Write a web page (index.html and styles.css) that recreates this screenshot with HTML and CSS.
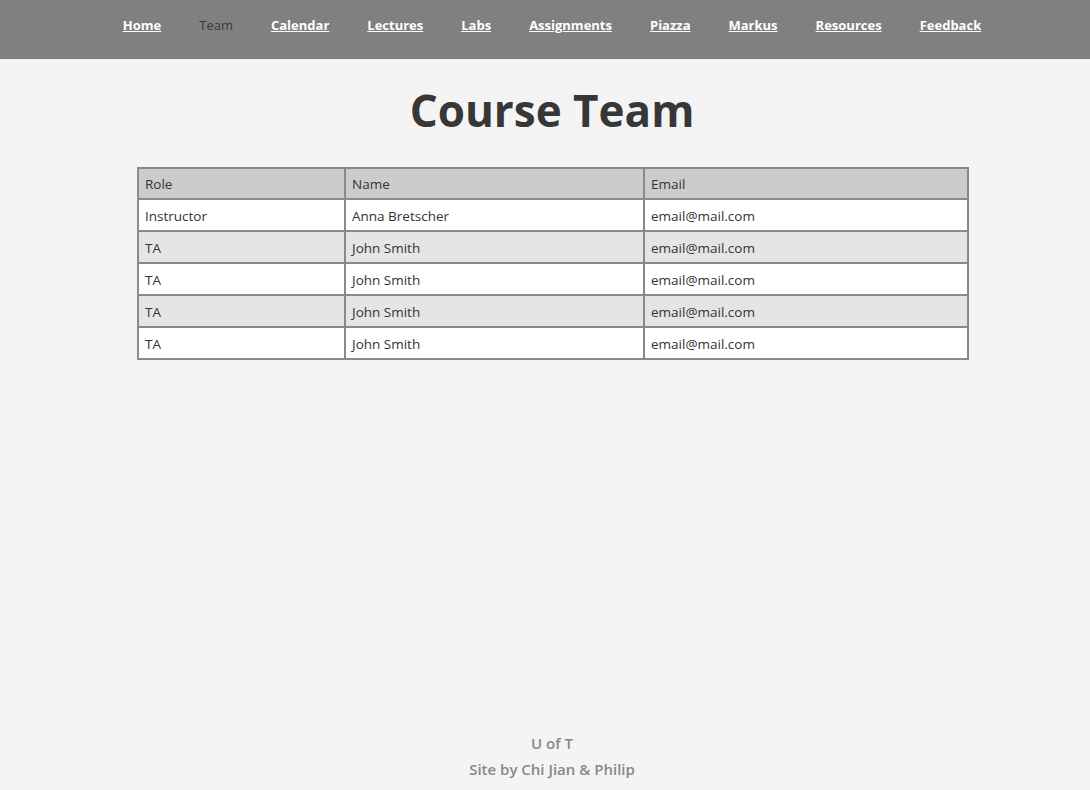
FILE: index.html
```html
<!DOCTYPE html>
<html lang="en">
<head>
<meta charset="utf-8">
<title>Course Team</title>
<link rel="stylesheet" href="styles.css">
</head>
<body>
<nav class="topnav">
  <ul class="navlist">
    <li><a href="#">Home</a></li>
    <li><span class="current">Team</span></li>
    <li><a href="#">Calendar</a></li>
    <li><a href="#">Lectures</a></li>
    <li><a href="#">Labs</a></li>
    <li><a href="#">Assignments</a></li>
    <li><a href="#">Piazza</a></li>
    <li><a href="#">Markus</a></li>
    <li><a href="#">Resources</a></li>
    <li><a href="#">Feedback</a></li>
  </ul>
</nav>
<main class="content">
  <h1 class="title">Course Team</h1>
  <table class="team">
    <thead>
      <tr><th class="c-role">Role</th><th class="c-name">Name</th><th>Email</th></tr>
    </thead>
    <tbody>
      <tr><td>Instructor</td><td>Anna Bretscher</td><td>email@mail.com</td></tr>
      <tr><td>TA</td><td>John Smith</td><td>email@mail.com</td></tr>
      <tr><td>TA</td><td>John Smith</td><td>email@mail.com</td></tr>
      <tr><td>TA</td><td>John Smith</td><td>email@mail.com</td></tr>
      <tr><td>TA</td><td>John Smith</td><td>email@mail.com</td></tr>
    </tbody>
  </table>
</main>
<footer class="footer">
  <p>U of T</p>
  <p>Site by Chi Jian &amp; Philip</p>
</footer>
</body>
</html>
```

FILE: styles.css
```css
html, body {
  margin: 0;
  padding: 0;
}
body {
  background: #f4f4f4;
  font-family: "Open Sans", "Noto Sans", sans-serif;
  color: #333;
  min-height: 100vh;
  display: flex;
  flex-direction: column;
}
.topnav {
  background: #808080;
  height: 59px;
  box-sizing: border-box;
  padding-top: 15px;
  border-bottom: 1px solid #7a7a7a;
}
.navlist {
  list-style: none;
  margin: 0;
  padding: 0 0 0 14px;
  display: flex;
  justify-content: center;
  gap: 38px;
  font-size: 13px;
  line-height: 20px;
}
.navlist a {
  color: #fff;
  font-weight: 700;
  text-decoration: underline;
}
.navlist .current {
  color: #3a3a3a;
}
.content {
  flex: 1;
  padding-left: 14px;
  display: flex;
  flex-direction: column;
  align-items: center;
}
.title {
  margin: 21px 0 0;
  font-size: 44px;
  line-height: 60px;
  font-weight: 700;
  color: #373737;
}
.team {
  margin: 27px 0 0 2px;
  width: 832px;
  border-collapse: collapse;
  border: 2px solid #8a8a8a;
  font-size: 13.5px;
}
.team th, .team td {
  border: 2px solid #8a8a8a;
  text-align: left;
  font-weight: 400;
  padding: 1px 6px 0;
  height: 29px;
  color: #333;
}
.team th { background: #cccccc; height: 28px; }
.team .c-role { width: 193px; }
.team .c-name { width: 285px; }
.team tbody tr:nth-child(odd) td { background: #ffffff; }
.team tbody tr:nth-child(even) td { background: #e5e5e5; }
.footer {
  padding: 0 0 8px 14px;
  text-align: center;
  color: #888;
  font-size: 15px;
  font-weight: 600;
}
.footer p {
  margin: 0;
  line-height: 26px;
}
```
